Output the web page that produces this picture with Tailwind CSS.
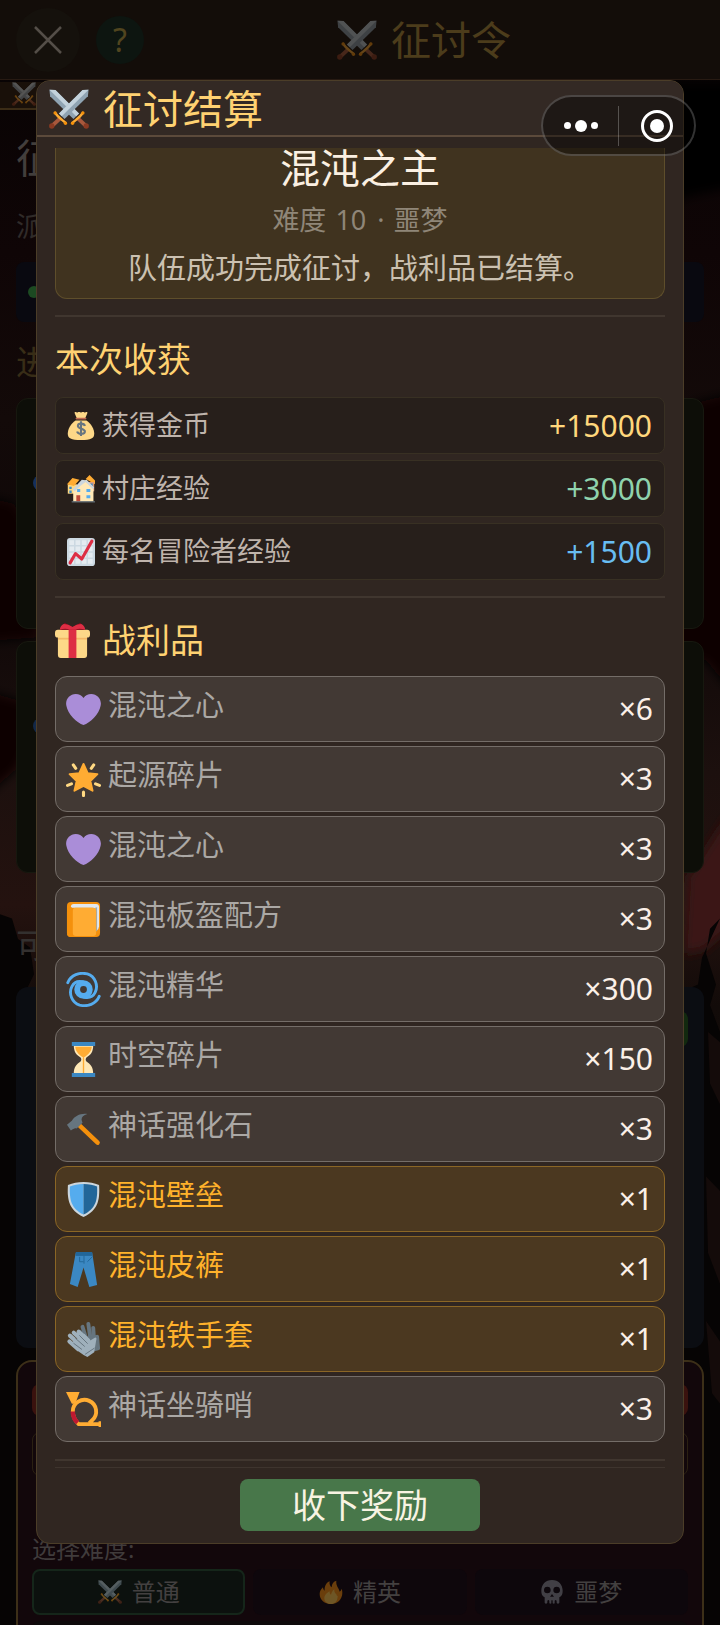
<!DOCTYPE html>
<html lang="zh-CN">
<head>
    <meta charset="UTF-8">
    <meta name="viewport" content="width=device-width, initial-scale=1.0">
    <title>征讨结算</title>
    <script src="https://cdn.jsdelivr.net/npm/@tailwindcss/browser@4"></script>
    <style>
        body { font-family: 'Noto Sans', 'Noto Sans CJK SC', sans-serif; }
    </style>
</head>
<body class="bg-black">
<!-- Shared icons -->
<svg class="hidden">
    <symbol id="sword" viewBox="0 0 36 36">
        <path fill="#8fa3b2" d="M35.600.600l-5.400.400L9 22l5 5L35 6.500z"/>
        <path fill="#c3d2dc" d="M35.600.600l-5.400.400L9 22l2.500 2.500z"/>
        <path fill="none" stroke="#a8583c" stroke-width="3.600" d="M10.500 26L3.500 32.500"/>
        <path fill="none" stroke="#ffac33" stroke-width="2.200" stroke-linecap="round" stroke-linejoin="round" d="M5.500 21.500l2.500 3 4 3.500 3 2.500"/>
        <circle cx="5.500" cy="21.500" r="1.500" fill="#f4900c"/>
        <circle cx="14.800" cy="30.800" r="1.500" fill="#f4900c"/>
        <circle cx="2.500" cy="33.300" r="2.400" fill="#8a3a22"/>
    </symbol>
    <symbol id="swords" viewBox="0 0 36 36">
        <use href="#sword" width="36" height="36" transform="matrix(-1 0 0 1 36 0)"/>
        <use href="#sword" width="36" height="36"/>
    </symbol>
    <symbol id="heart" viewBox="0 0 36 36">
        <path fill="#aa8dd8" d="M35.885 11.833c0-5.450-4.418-9.868-9.867-9.868-3.308 0-6.227 1.633-8.018 4.129-1.791-2.496-4.710-4.129-8.017-4.129-5.450 0-9.868 4.417-9.868 9.868 0 .772.098 1.520.266 2.241C1.751 22.587 11.216 31.568 18 34.034c6.783-2.466 16.249-11.447 17.617-19.959.170-.721.268-1.469.268-2.242z"/>
    </symbol>
</svg>

<div class="relative overflow-hidden min-h-screen">
    <!-- Battlefield backdrop -->
    <svg class="absolute inset-0 w-full h-full" viewBox="0 0 720 1625" preserveAspectRatio="none">
        <defs>
            <linearGradient id="sky" x1="0" y1="0" x2="0" y2="1">
                <stop offset="0" stop-color="#060303"/>
                <stop offset=".15" stop-color="#0f0506"/>
                <stop offset=".25" stop-color="#130a09"/>
                <stop offset=".35" stop-color="#0e0707"/>
                <stop offset=".46" stop-color="#1c100e"/>
                <stop offset=".54" stop-color="#24120f"/>
                <stop offset=".6" stop-color="#120b09"/>
                <stop offset=".8" stop-color="#080505"/>
                <stop offset="1" stop-color="#040303"/>
            </linearGradient>
            <filter id="soft"><feGaussianBlur stdDeviation="5"/></filter>
        </defs>
        <path fill="url(#sky)" d="M0 0h720v1625H0z"/>
        <g filter="url(#soft)">
            <path fill="#080606" d="M-20 480l34 8 22 40v90l-56 4zM-20 668l44 12 12 26-20 40-36 30z"/>
            <path fill="#060404" d="M660 80h80v100l-50 10-30 10z"/>
            <path fill="#080505" d="M740 380l-44 10-20 10v240h30l34 40z"/>
            <path fill="#3a1712" d="M688 850l40-60v110l-24 20-20 4z"/>
        </g>
        <path fill="#060404" d="M0 886l12 4 6 20 12 8 4 26-10 20 6 36-8 30 10 60-10 80 20 120v340H0zM720 890l-10 10-4 24 10 30-6 20 10 26v640h-36V960l14-6 4-26z"/>
        <path fill="#140b0a" d="M708 1000l12 10v60l-10-20zM706 1140l14 14v90l-12-30zM706 1280l14 20v60l-8-10z"/>
    </svg>

    <!-- Page behind the dialog -->
    <div class="relative">
        <header class="h-20 border-b border-[#271a12] bg-[#130d09] flex items-center relative">
            <button class="ml-4 w-16 h-16 rounded-full bg-[#15110c] flex items-center justify-center" aria-label="关闭">
                <svg class="w-7 h-7" viewBox="0 0 28 28" fill="none" stroke="#544e48" stroke-width="2.500"><path d="M1 1l26 26M27 1L1 27"/></svg>
            </button>
            <button class="ml-4 w-12 h-12 rounded-full bg-[#0d1510] text-[#51451f] text-[32px] leading-12">?</button>
            <h1 class="absolute inset-x-0 top-5 flex items-center justify-center gap-3.5 pl-32 text-[40px] leading-10 text-[#4c3c1b]">
                <svg class="w-10 h-10 opacity-35"><use href="#swords"/></svg>征讨令
            </h1>
        </header>
        <div class="h-7 w-60 border-b-2 border-[#3b2c16] bg-[#191009] pl-3">
            <svg class="w-6 h-6 mt-0.5 opacity-35"><use href="#swords"/></svg>
        </div>
        <main class="px-4">
            <p class="mt-7 text-[40px] leading-10 text-[#423e3c]">征</p>
            <p class="mt-8 text-[28px] leading-8 text-[#302b29]">派</p>
            <div class="mt-5 h-[60px] rounded-lg bg-[#090910] pl-3 flex items-center">
                <span class="w-3 h-3 rounded-full bg-[#1c4a22]"></span>
            </div>
            <p class="mt-5 text-[34px] leading-10 text-[#382d17]">进</p>
            <section class="mt-4 h-[231px] rounded-xl border border-[#17180f] bg-[#0d0e08] pl-4 pt-16 overflow-hidden">
                <span class="block w-4 h-4 mt-3 rounded-full bg-[#15305c]"></span>
            </section>
            <section class="mt-3 h-[232px] rounded-xl border border-[#17180f] bg-[#0d0e08] pl-4 pt-16 overflow-hidden">
                <span class="block w-4 h-4 mt-3 rounded-full bg-[#122848]"></span>
            </section>
            <p class="mt-[52px] text-[34px] leading-10 text-[#33302f]">可</p>
            <section class="mt-[22px] h-[361px] rounded-xl bg-[#0b0d12] flex justify-end pt-6 pr-4">
                <span class="w-24 h-9 rounded-lg bg-[#12290f]"></span>
            </section>
            <section class="mt-3 rounded-2xl border-2 border-[#3c2f18] bg-[#12070b] p-[14px] pt-[22px]">
                <div class="h-8 rounded-lg bg-[#3a120e]"></div>
                <div class="mt-4 h-11 rounded-lg border border-[#2a2012]"></div>
                <p class="mt-[57px] text-2xl leading-8 text-[#403b3b]">选择难度:</p>
                <div class="mt-1 grid grid-cols-3 gap-2 text-2xl text-[#434040]">
                    <button class="h-[46px] rounded-lg border-2 border-[#15261a] bg-[#0c110e] flex items-center justify-center gap-2.5">
                        <svg class="w-6 h-6 opacity-40"><use href="#swords"/></svg>普通
                    </button>
                    <button class="h-[46px] rounded-lg bg-[#0e070c] flex items-center justify-center gap-2.5">
                        <svg class="w-6 h-6 opacity-40" viewBox="0 0 36 36"><path fill="#f4900c" d="M35 19c0-2-.3-4-1-6-.5 2-1.500 3.500-3 4.500C30 12 25 9 26 1c-4 1-7 5-7 10-2-1-4-5-3-9-5 2-8 7-7.500 14-1.500-1-2.500-3-2.500-5-3 3-5 6-5 10 0 9 7.500 15 17 15s17-7 17-17z"/><path fill="#ffcc4d" d="M28 24c-1 0-2-1-2-3-3-1-3-4-3-7-3 2-4 5-5 8-2-1-2-3-2-5-4 2-8 6-8 10 0 6 5 9 10 9s10-3 10-12z"/></svg>精英
                    </button>
                    <button class="h-[46px] rounded-lg bg-[#0d070c] flex items-center justify-center gap-2.5">
                        <svg class="w-6 h-6 opacity-30" viewBox="0 0 36 36"><path fill="#b8c2c9" fill-rule="evenodd" d="M18 0C8 0 2 7 2 16c0 5 1 8 5 10v8q2 3 4 0v-3q2-2 3 0v4q2 1 3 0v-4q1-2 2 0v4q2 1 3 0v-4q1-2 3 0v3q2 3 4 0v-8c4-2 5-5 5-10C34 7 28 0 18 0zM11 10a5 5 0 1 1 0 10 5 5 0 0 1 0-10zM25 10a5 5 0 1 1 0 10 5 5 0 0 1 0-10zM18 21l3 4h-6z"/></svg>噩梦
                    </button>
                </div>
                <div class="mt-[6px] h-10 rounded-lg bg-[#0e0a0b]"></div>
            </section>
        </main>
    </div>

    <!-- Settlement dialog -->
    <div class="absolute inset-0 pt-20 px-9">
        <div role="dialog" aria-labelledby="dialog-title" class="rounded-[14px] border border-[#4b3d28] bg-[#302621] overflow-hidden">
            <div class="h-14 border-b-2 border-[#5c4a3b] bg-[#332924] pl-3 pt-0.5 flex items-center gap-3.5">
                <svg class="w-10 h-10"><use href="#swords"/></svg>
                <h2 id="dialog-title" class="text-[40px] leading-10 text-[#ffd272]">征讨结算</h2>
            </div>

            <div class="px-[18px] pt-[11px]">
                <section class="rounded-b-xl border border-t-0 border-[#5e4e2b] bg-[#40331f] text-center pb-3.5">
                    <h3 class="text-[40px] leading-10 text-[#fbf0e2]">混沌之主</h3>
                    <p class="mt-4 text-[27px] leading-8 text-[#8f8678]">难度 <span class="mx-0.5">10</span> <span class="mx-0.5">·</span> 噩梦</p>
                    <p class="mt-4 text-[29px] leading-8 text-[#cbc1b1]">队伍成功完成征讨，战利品已结算。</p>
                </section>

                <section class="mt-4 border-t-2 border-[#40362f] pt-[22px]">
                    <h3 class="text-[34px] leading-10 text-[#ffd272]">本次收获</h3>
                    <ul class="mt-[18px] flex flex-col gap-1.5 text-[27px] text-[#bfb4ac]">
                        <li class="h-[57px] rounded-lg border border-[#383023] bg-[#271f1b] pl-[11px] pr-3 flex items-center gap-[7px]">
                            <svg class="w-7 h-7" viewBox="0 0 36 36"><path fill="#fdd888" d="M11 11C5 15 1 22 1 28c0 6 4 8 17 8s17-2 17-8c0-6-4-13-10-17z"/><path fill="#fdd888" d="M10 2c-1-2 1-3 3-1 2-2 4-1 5 0 1-1 3-2 5 0 2-2 4-1 3 1l-3 7H13z"/><path fill="none" stroke="#bf6952" stroke-width="2" stroke-linecap="round" d="M12 8.500h12"/><path fill="none" stroke="#67757f" stroke-width="2.700" d="M23 18c-1-4-9-4-9 0s9 3 9 7-9 4-10 0M18 12v19"/></svg>
                            <span>获得金币</span>
                            <span class="ml-auto text-3xl text-[#ffd77c]">+15000</span>
                        </li>
                        <li class="h-[57px] rounded-lg border border-[#383023] bg-[#271f1b] pl-[11px] pr-3 flex items-center gap-[7px]">
                            <svg class="w-7 h-7" viewBox="0 0 36 36"><path fill="#ffd983" d="M1 12h12v12H1z"/><path fill="#ffac33" d="M0 12l7-8 9 2-7 8zM24 5l5-5 7 7v5z"/><path fill="#d99e82" d="M26 9h9v12h-9z"/><path fill="#3b88c3" d="M3 15h3v3H3zM3 20h3v3H3zM30 11h3v3h-3z"/><path fill="#ffe8b6" d="M8 19l9-9 8-4 9 10v18H8z"/><path fill="#ccd6dd" d="M7 19L19 6l7 1 9 9-2 2-9-9-7 5-7 7z"/><path fill="#bf4b3a" d="M12 26h5v8h-5z"/><path fill="#55acee" d="M13 18h4v4h-4zM25 18h5v4h-5zM25 26h5v4h-5z"/><path stroke="#67757f" stroke-width="1.500" d="M6 34.500h30"/></svg>
                            <span>村庄经验</span>
                            <span class="ml-auto text-3xl text-[#8fd3ad]">+3000</span>
                        </li>
                        <li class="h-[57px] rounded-lg border border-[#383023] bg-[#271f1b] pl-[11px] pr-3 flex items-center gap-[7px]">
                            <svg class="w-7 h-7" viewBox="0 0 36 36"><rect width="36" height="36" rx="4" fill="#ccd9e2"/><path fill="#e4ebf0" d="M3 3h6v6H3zM11 3h6v6h-6zM19 3h6v6h-6zM27 3h6v6h-6zM3 11h6v6H3zM11 11h6v6h-6zM19 11h6v6h-6zM27 11h6v6h-6zM3 19h6v6H3zM11 19h6v6h-6zM19 19h6v6h-6zM27 19h6v6h-6zM3 27h6v6H3zM11 27h6v6h-6zM19 27h6v6h-6zM27 27h6v6h-6z"/><path fill="none" stroke="#dd2e44" stroke-width="4" stroke-linecap="round" stroke-linejoin="round" d="M4 32l7-12 8 7L32 4"/></svg>
                            <span>每名冒险者经验</span>
                            <span class="ml-auto text-3xl text-[#68bdf2]">+1500</span>
                        </li>
                    </ul>
                </section>

                <section class="mt-4 border-y-2 border-[#40362f] pt-[22px] pb-[17px]">
                    <h3 class="flex items-center gap-3 text-[34px] leading-10 text-[#ffd272]">
                        <svg class="w-[35px] h-[35px]" viewBox="0 0 36 36"><path fill="#fdd888" d="M3 13h30v20q0 3-3 3H6q-3 0-3-3z"/><path fill="#f4b867" d="M3 15h30v2H3z"/><rect y="7" width="36" height="8" rx="3" fill="#fdd888"/><path fill="#dd2e44" d="M14 6h8v30h-8z"/><path fill="#a0041e" d="M5 7L10 0l8 4 8-4 5 7z"/><path fill="#dd2e44" d="M5 7q0-4 4-6 5 0 9 3 4-3 9-3 4 2 4 6-6-2-10 0h-6q-4-2-10 0z"/></svg>
                        战利品
                    </h3>
                    <ul class="mt-4 flex flex-col gap-1 text-[29px] leading-8 text-[#aba8a5]">
                        <li class="h-[66px] rounded-xl border border-[#746d68] bg-[#423934] pl-2.5 pr-[11px] flex items-center gap-[7px]">
                            <svg class="w-[35px] h-[35px]"><use href="#heart"/></svg>
                            <span class="pb-2">混沌之心</span>
                            <span class="ml-auto text-3xl text-[#fbf0e8]">×6</span>
                        </li>
                        <li class="h-[66px] rounded-xl border border-[#746d68] bg-[#423934] pl-2.5 pr-[11px] flex items-center gap-[7px]">
                            <svg class="w-[35px] h-[35px]" viewBox="0 0 36 36"><path fill="#ffac33" stroke="#ffac33" stroke-width="2" stroke-linejoin="round" d="M18 2l4.300 9.500 10 1-7.300 7 2.300 10L18 24.500 8.700 29.500l2.300-10-7.300-7 10-1z"/><path stroke="#ffd983" stroke-width="3.200" stroke-linecap="round" d="M7.500 3l2.500 3.500M28.500 3L26 6.500M1.600 24l4-1.500M34.400 24l-4-1.500M18 31v3.500"/></svg>
                            <span class="pb-2">起源碎片</span>
                            <span class="ml-auto text-3xl text-[#fbf0e8]">×3</span>
                        </li>
                        <li class="h-[66px] rounded-xl border border-[#746d68] bg-[#423934] pl-2.5 pr-[11px] flex items-center gap-[7px]">
                            <svg class="w-[35px] h-[35px]"><use href="#heart"/></svg>
                            <span class="pb-2">混沌之心</span>
                            <span class="ml-auto text-3xl text-[#fbf0e8]">×3</span>
                        </li>
                        <li class="h-[66px] rounded-xl border border-[#746d68] bg-[#423934] pl-2.5 pr-[11px] flex items-center gap-[7px]">
                            <svg class="w-[35px] h-[35px]" viewBox="0 0 36 36"><rect x="1" width="34" height="36" rx="4" fill="#f4900c"/><path fill="#e1e8ed" d="M5 5q0-3 3-3h23q3 0 3 3v20q0 3-3 5z"/><path fill="#99aab5" d="M30 6l2-.5V29l-2 2z"/><rect x="1" y="6" width="30" height="30" rx="4" fill="#f4900c"/><rect x="7" y="6" width="24" height="29" rx="3" fill="#ffac33"/></svg>
                            <span class="pb-2">混沌板盔配方</span>
                            <span class="ml-auto text-3xl text-[#fbf0e8]">×3</span>
                        </li>
                        <li class="h-[66px] rounded-xl border border-[#746d68] bg-[#423934] pl-2.5 pr-[11px] flex items-center gap-[7px]">
                            <svg class="w-[35px] h-[35px]" viewBox="0 0 36 36" fill="none" stroke="#55acee" stroke-width="3" stroke-linecap="round"><circle cx="18" cy="18" r="6.500" stroke-width="6"/><path d="M1.800 11C5 3 14 0 22 2c8 2.500 11.500 12 8 19-2 4-6 6-11 5M34.200 25C31 33 22 36 14 34 6 31.500 2.500 22 6 15c2-4 6-6 11-5"/></svg>
                            <span class="pb-2">混沌精华</span>
                            <span class="ml-auto text-3xl text-[#fbf0e8]">×300</span>
                        </li>
                        <li class="h-[66px] rounded-xl border border-[#746d68] bg-[#423934] pl-2.5 pr-[11px] flex items-center gap-[7px]">
                            <svg class="w-[35px] h-[35px]" viewBox="0 0 36 36"><path fill="#ffe8b6" d="M8 3h20c0 8-3 10-7 13-1 1-1 3 0 4 4 3 7 5 7 13H8c0-8 3-10 7-13 1-1 1-3 0-4C11 13 8 11 8 3z"/><path fill="#ffac33" d="M9.500 5h17c-.5 5-3 7-6.500 10q-2 1.500-4 0C12.500 12 10 10 9.500 5zM17.300 14h1.400v18h-1.400z"/><path fill="#3b88c3" d="M6 0h24v4H6zM6 32h24v4H6z"/></svg>
                            <span class="pb-2">时空碎片</span>
                            <span class="ml-auto text-3xl text-[#fbf0e8]">×150</span>
                        </li>
                        <li class="h-[66px] rounded-xl border border-[#746d68] bg-[#423934] pl-2.5 pr-[11px] flex items-center gap-[7px]">
                            <svg class="w-[35px] h-[35px]" viewBox="0 0 36 36"><path stroke="#f4900c" stroke-width="4.600" stroke-linecap="round" d="M13 13l19.500 18.500"/><path fill="#66757f" d="M1 13L6 9c3-5 9-8 16-7-4 1-6 3-6 6l1 3-6 6c-2-1-3 0-6 2z"/></svg>
                            <span class="pb-2">神话强化石</span>
                            <span class="ml-auto text-3xl text-[#fbf0e8]">×3</span>
                        </li>
                        <li class="h-[66px] rounded-xl border border-[#8b6625] bg-[#4b3820] pl-2.5 pr-[11px] flex items-center gap-[7px]">
                            <svg class="w-[35px] h-[35px]" viewBox="0 0 36 36"><path fill="#ccd6dd" d="M18 0c6 0 11 1 16 3 1 15-1 26-16 33C3 29 1 18 2 3 7 1 12 0 18 0z"/><path fill="#55acee" d="M18 2C12 2 8 3 4 4.500 3.500 18 5 27 18 33.500z"/><path fill="#226699" d="M18 2c6 0 10 1 14 2.500C32.500 18 31 27 18 33.500z"/></svg>
                            <span class="pb-2 text-[#ffb22b]">混沌壁垒</span>
                            <span class="ml-auto text-3xl text-[#fbf0e8]">×1</span>
                        </li>
                        <li class="h-[66px] rounded-xl border border-[#8b6625] bg-[#4b3820] pl-2.5 pr-[11px] flex items-center gap-[7px]">
                            <svg class="w-[35px] h-[35px]" viewBox="0 0 36 36"><path fill="#3b88c3" d="M10 1h17l5 33-8 2-6-20-6 20-8-3z"/><path fill="#226699" d="M10 0h17v4H10z"/><path fill="none" stroke="#226699" d="M18.500 4v8M14 5v5h4M27 5l-5 5"/></svg>
                            <span class="pb-2 text-[#ffb22b]">混沌皮裤</span>
                            <span class="ml-auto text-3xl text-[#fbf0e8]">×1</span>
                        </li>
                        <li class="h-[66px] rounded-xl border border-[#8b6625] bg-[#4b3820] pl-2.5 pr-[11px] flex items-center gap-[7px]">
                            <svg class="w-[35px] h-[35px]" viewBox="0 0 36 36" stroke-linecap="round" stroke-linejoin="round"><path fill="none" stroke="#66757f" stroke-width="4" d="M17 5l4 13M23 2l2 15M28 6l1 14M14 10l7 12M32 15l1 12"/><path fill="#66757f" d="M15 13l17 3 1 13-7 2z"/><path fill="none" stroke="#9fb0bc" stroke-width="4.200" d="M3.500 20l9 8M4 14l10 9M8 11l10 9M13 10l10 9"/><path fill="#9fb0bc" d="M7 20l12-8 6 7 5-3q2 0 1 3l-2 12-7 5q-9-4-15-12z"/><path fill="none" stroke="#66757f" d="M10 17l9 8M14 14l8 8M8 22l8 6M20 33l9-6"/></svg>
                            <span class="pb-2 text-[#ffb22b]">混沌铁手套</span>
                            <span class="ml-auto text-3xl text-[#fbf0e8]">×1</span>
                        </li>
                        <li class="h-[66px] rounded-xl border border-[#746d68] bg-[#423934] pl-2.5 pr-[11px] flex items-center gap-[7px]">
                            <svg class="w-[35px] h-[35px]" viewBox="0 0 36 36"><path fill="none" stroke="#ffac33" stroke-width="4" stroke-linejoin="round" d="M34 33H13Q7 27 7 20a12 12 0 1 1 20 9l-3 3"/><path fill="none" stroke="#be1931" stroke-width="4.600" d="M7 20q0 7 5 11.500"/><path fill="#ffac33" d="M0 0h14L9.500 12H6zM33.500 30H36v6h-2.500z"/></svg>
                            <span class="pb-2">神话坐骑哨</span>
                            <span class="ml-auto text-3xl text-[#fbf0e8]">×3</span>
                        </li>
                    </ul>
                </section>

                <div class="mt-1.5 border-t border-[#3e342e] pt-[11px] pb-3 flex justify-center">
                    <button class="w-60 h-[52px] rounded-lg bg-[#48774a] text-[34px] leading-10 text-[#f8f3e2]">收下奖励</button>
                </div>
            </div>
        </div>
    </div>

    <!-- Mini program capsule -->
    <div class="absolute top-[95px] right-6 w-[155px] h-[61px] rounded-full border-2 border-white/20 bg-black/40 flex items-center">
        <button class="flex-1 flex justify-center items-center gap-1" aria-label="更多">
            <span class="w-[7px] h-[7px] rounded-full bg-white"></span>
            <span class="w-3 h-3 rounded-full bg-white"></span>
            <span class="w-[7px] h-[7px] rounded-full bg-white"></span>
        </button>
        <span class="w-px h-10 bg-white/25"></span>
        <button class="flex-1 flex justify-center" aria-label="退出">
            <span class="w-8 h-8 rounded-full border-3 border-white flex items-center justify-center"><span class="w-3.5 h-3.5 rounded-full bg-white"></span></span>
        </button>
    </div>
</div>
</body>
</html>
